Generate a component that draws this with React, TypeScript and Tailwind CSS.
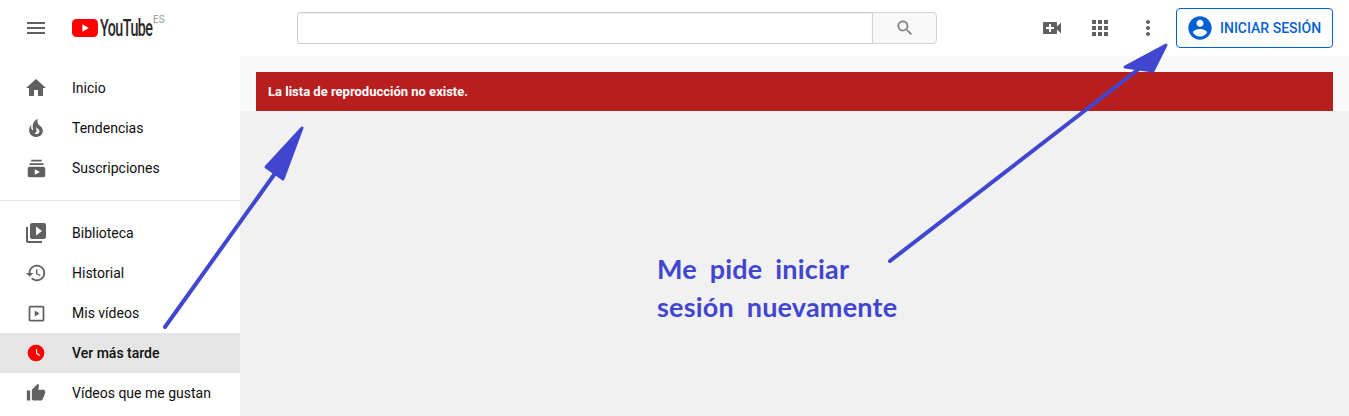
const paths = {
  menu: "M3 18h18v-2H3v2zm0-5h18v-2H3v2zm0-7v2h18V6H3z",
  home: "M10 20v-6h4v6h5v-8h3L12 3 2 12h3v8z",
  fire: "M17.53 11.2c-.23-.3-.5-.56-.76-.82-.65-.6-1.4-1.03-2.03-1.66C13.3 7.26 13 4.85 13.91 3c-.91.23-1.75.75-2.45 1.32-2.54 2.08-3.54 5.75-2.34 8.9.04.1.08.2.08.33 0 .22-.15.42-.35.5-.22.1-.46.04-.64-.12-.06-.05-.1-.1-.15-.17-1.1-1.43-1.28-3.48-.53-5.12C5.89 10 5 12.3 5.14 14.47c.04.5.1 1 .27 1.5.14.6.4 1.2.72 1.73 1.04 1.73 2.87 2.97 4.84 3.22 2.1.27 4.35-.12 5.96-1.6 1.8-1.66 2.45-4.32 1.5-6.6l-.13-.26c-.2-.46-.47-.87-.8-1.25l.03-.01zm-3.1 6.3c-.28.24-.73.5-1.08.6-1.1.4-2.2-.16-2.87-.82 1.19-.28 1.9-1.16 2.11-2.05.17-.8-.15-1.46-.28-2.23-.12-.74-.1-1.37.17-2.06.19.38.39.76.63 1.06.77 1 1.98 1.44 2.24 2.8.04.14.06.28.06.43.03.82-.33 1.72-.98 2.27z",
  subs: "M20 8H4V6h16v2zm-2-6H6v2h12V2zm4 10v8c0 1.1-.9 2-2 2H4c-1.1 0-2-.9-2-2v-8c0-1.1.9-2 2-2h16c1.1 0 2 .9 2 2zm-6 4l-6-3.27v6.53L16 16z",
  library: "M4 6H2v14c0 1.1.9 2 2 2h14v-2H4V6zm16-4H8c-1.1 0-2 .9-2 2v12c0 1.1.9 2 2 2h12c1.1 0 2-.9 2-2V4c0-1.1-.9-2-2-2zm-8 12.5v-9l6 4.5-6 4.5z",
  history: "M13 3c-4.97 0-9 4.03-9 9H1l3.89 3.89.07.14L9 12H6c0-3.87 3.13-7 7-7s7 3.13 7 7-3.13 7-7 7c-1.93 0-3.68-.79-4.94-2.06l-1.42 1.42C8.27 19.99 10.51 21 13 21c4.97 0 9-4.03 9-9s-4.03-9-9-9zm-1 5v5l4.28 2.54.72-1.21-3.5-2.08V8H12z",
  videos: "M19 5v14H5V5h14m0-2H5c-1.1 0-2 .9-2 2v14c0 1.1.9 2 2 2h14c1.1 0 2-.9 2-2V5c0-1.1-.9-2-2-2zM10 8.5v7l5.5-3.5z",
  thumb: "M1 21h4V9H1v12zm22-11c0-1.1-.9-2-2-2h-6.31l.95-4.57.03-.32c0-.41-.17-.79-.44-1.06L14.17 1 7.59 7.59C7.22 7.95 7 8.45 7 9v10c0 1.1.9 2 2 2h9c.83 0 1.54-.5 1.84-1.22l3.02-7.05c.09-.23.14-.47.14-.73v-2z",
  cam: "M17 10.5V7c0-.55-.45-1-1-1H4c-.55 0-1 .45-1 1v10c0 .55.45 1 1 1h12c.55 0 1-.45 1-1v-3.5l4 4v-11l-4 4zM14 13h-3v3H9v-3H6v-2h3V8h2v3h3v2z",
  apps: "M4 8h4V4H4v4zm6 12h4v-4h-4v4zm-6 0h4v-4H4v4zm0-6h4v-4H4v4zm6 0h4v-4h-4v4zm6-10v4h4V4h-4zm-6 4h4V4h-4v4zm6 6h4v-4h-4v4zm0 6h4v-4h-4v4z",
  more: "M12 8c1.1 0 2-.9 2-2s-.9-2-2-2-2 .9-2 2 .9 2 2 2zm0 2c-1.1 0-2 .9-2 2s.9 2 2 2 2-.9 2-2-.9-2-2-2zm0 6c-1.1 0-2 .9-2 2s.9 2 2 2 2-.9 2-2-.9-2-2-2z",
  account: "M12 2C6.48 2 2 6.48 2 12s4.48 10 10 10 10-4.48 10-10S17.52 2 12 2zm0 3c1.66 0 3 1.34 3 3s-1.34 3-3 3-3-1.34-3-3 1.34-3 3-3zm0 14.2c-2.5 0-4.71-1.28-6-3.22.03-1.99 4-3.08 6-3.08 1.99 0 5.97 1.09 6 3.08-1.29 1.94-3.5 3.22-6 3.22z",
  search: "M15.5 14h-.79l-.28-.27C15.41 12.59 16 11.11 16 9.5 16 5.91 13.09 3 9.5 3S3 5.91 3 9.5 5.91 16 9.5 16c1.61 0 3.09-.59 4.23-1.57l.27.28v.79l5 4.99L20.49 19l-4.99-5zm-6 0C7.01 14 5 11.99 5 9.5S7.01 5 9.5 5 14 7.01 14 9.5 11.99 14 9.5 14z",
};

function Icon({ d, className = "w-6 h-6 fill-[#606060]" }: { d: string; className?: string }) {
  return (
    <svg viewBox="0 0 24 24" className={className}>
      <path d={d} />
    </svg>
  );
}

function WatchLater() {
  return (
    <svg viewBox="0 0 24 24" className="w-5 h-5">
      <circle cx="12" cy="12" r="10" fill="#ff0000" />
      <path d="M12 7.5h1.4v4.6l3.6 2.2-.8 1.2-4.2-2.6z" fill="#fff" />
    </svg>
  );
}

function NavItem({ icon, label, active }: { icon: React.ReactNode; label: string; active?: boolean }) {
  return (
    <div className={`h-10 flex items-center px-6 gap-6 text-sm text-[#0d0d0d] ${active ? "bg-[#e5e5e5] font-medium" : ""}`}>
      <div className="w-6 h-6 flex items-center justify-center">{icon}</div>
      <span>{label}</span>
    </div>
  );
}

function Logo() {
  return (
    <div className="flex items-center ml-6">
      <svg viewBox="0 0 26 18" className="w-[26px] h-[18px] shrink-0">
        <rect width="26" height="18" rx="4.5" fill="#ff0000" />
        <path d="M10.4 5.2v7.6l6.4-3.8z" fill="#fff" />
      </svg>
      <div className="w-[52px] ml-[2px] shrink-0">
        <span className="block w-[84px] origin-left scale-x-[0.62] text-[23px] leading-none font-medium tracking-[-0.8px] text-[#282828]">YouTube</span>
      </div>
      <span className="self-start -mt-[2px] ml-[1px] text-[10px] leading-none text-[#999]">ES</span>
    </div>
  );
}

export default function App() {
  return (
    <div className="relative w-[1349px] h-[416px] overflow-hidden bg-white font-['Roboto',sans-serif]">
      <header className="h-14 flex items-center">
        <div className="flex items-center w-[297px] shrink-0">
          <div className="pl-6">
            <Icon d={paths.menu} />
          </div>
          <Logo />
        </div>
        <div className="flex w-[640px] h-8 shrink-0">
          <div className="flex-1 bg-white border border-r-0 border-[#ccc] rounded-l-sm shadow-[inset_0_1px_2px_#eeeeee]" />
          <div className="w-[65px] flex items-center justify-center bg-[#f8f8f8] border border-[#d3d3d3] rounded-r-sm">
            <Icon d={paths.search} className="w-5 h-5 fill-[#808080]" />
          </div>
        </div>
        <div className="flex items-center ml-[103px] gap-6">
          <Icon d={paths.cam} />
          <Icon d={paths.apps} />
          <Icon d={paths.more} />
        </div>
        <div className="ml-4 w-[157px] h-10 flex items-center border border-[#065fd4] rounded-sm pl-[9px] gap-[6px]">
          <Icon d={paths.account} className="w-7 h-7 fill-[#065fd4]" />
          <span className="text-sm font-medium text-[#065fd4] whitespace-nowrap">INICIAR SESIÓN</span>
        </div>
      </header>

      <div className="flex h-[360px]">
        <aside className="w-60 shrink-0 pt-3 bg-white">
          <NavItem icon={<Icon d={paths.home} />} label="Inicio" />
          <NavItem icon={<Icon d={paths.fire} />} label="Tendencias" />
          <NavItem icon={<Icon d={paths.subs} className="w-[21px] h-[21px] fill-[#606060]" />} label="Suscripciones" />
          <div className="mt-3 mb-3 border-t border-[#e5e5e5]" />
          <NavItem icon={<Icon d={paths.library} />} label="Biblioteca" />
          <NavItem icon={<Icon d={paths.history} className="w-[22px] h-[22px] fill-[#606060]" />} label="Historial" />
          <NavItem icon={<Icon d={paths.videos} className="w-[21px] h-[21px] fill-[#606060]" />} label="Mis vídeos" />
          <NavItem icon={<WatchLater />} label="Ver más tarde" active />
          <NavItem icon={<Icon d={paths.thumb} className="w-5 h-5 fill-[#606060]" />} label="Vídeos que me gustan" />
        </aside>
        <main className="flex-1 bg-[#f1f1f1]">
          <div className="bg-[#f9f9f9] px-4 pt-4">
            <div className="h-[39px] flex items-center px-3 bg-[#b71f1f] text-white text-[13px] font-bold">
              La lista de reproducción no existe.
            </div>
          </div>
        </main>
      </div>

      {/* annotations drawn on top of the screenshot */}
      <svg viewBox="0 0 1349 416" className="absolute inset-0 w-[1349px] h-[416px] pointer-events-none">
        <g fill="#4146d0" stroke="#4146d0" strokeLinejoin="round" strokeLinecap="round">
          <path d="M165 327L276 172" strokeWidth="4" fill="none" />
          <path d="M302 128L266 167L283 179z" strokeWidth="3" />
          <path d="M890 261L1140 68" strokeWidth="4" fill="none" />
          <path d="M1166 45L1125 67L1153 71z" strokeWidth="3" />
        </g>
      </svg>
      <div className="absolute left-[657px] top-[250px] text-[#4146d0] font-['Lato',sans-serif] font-bold text-[27px] leading-[38px] tracking-[0.2px] [word-spacing:6px]">
        <p>Me pide iniciar</p>
        <p>sesión nuevamente</p>
      </div>
    </div>
  );
}
